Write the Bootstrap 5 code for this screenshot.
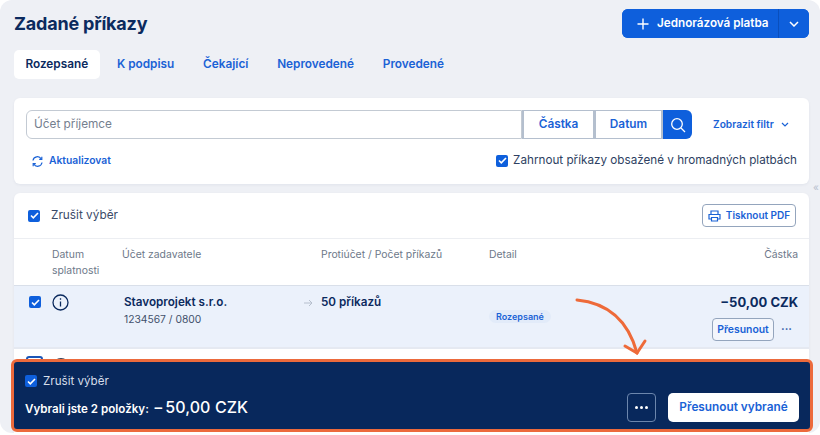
<!doctype html>
<html lang="cs"><head><meta charset="utf-8"><title>Zadané příkazy</title>
<link rel="stylesheet" href="https://cdn.jsdelivr.net/npm/bootstrap@5.3.0/dist/css/bootstrap.min.css">
<style>
html,body{height:435px;overflow:hidden;background:#fff}
body{font-family:Inter,"Liberation Sans",sans-serif;color:#0b2a5e;white-space:nowrap}
.shell{height:433px;background:#eef0f5;border-radius:12px;padding:9px 11px 0 14px;position:relative;overflow:hidden}
.ptitle{font-size:18px;font-weight:700;line-height:29px;margin:0;color:#0b2a5e;letter-spacing:-.2px}
.splitb{height:29px;border-radius:6px;overflow:hidden;background:#0e5fdc}
.splitb button{background:#0e5fdc;border:0;color:#fff;font-size:11.7px;font-weight:600;height:29px;padding:0;display:flex;align-items:center;white-space:nowrap}
.splitb .mainb{width:157px;padding-left:15px;gap:8px;border-right:1px solid #0a4fbd}
.splitb .caretb{width:30px;justify-content:center}
.tabsx{margin-top:12px;height:29px;gap:6px;font-size:11.8px;font-weight:600}
.tabsx a{display:flex;align-items:center;height:29px;padding:0 11.4px;color:#1a62d6;text-decoration:none;border-radius:5px}
.tabsx a.on{background:#fff;color:#0b2a5e}
.panel{background:#fff;border-radius:6px;box-shadow:0 1px 3px rgba(20,40,90,.06)}
.fpanel{margin-top:19px;height:86px;padding:12px 12px 0}
.fbar{height:29px;font-size:11.8px}
.finput{flex:1;border:1px solid #c3cad3;border-radius:6px 0 0 6px;padding-left:7px;line-height:27px;color:#75808f}
.fbtn{border:1px solid #b4bfce;border-left-width:2px;height:29px;display:flex;align-items:center;justify-content:center;color:#1a62d6;font-weight:600;background:#fff}
.fc1{width:72px}.fc2{width:69px;border-right-width:2px}
.fsearch{width:29px;height:29px;background:#0e5fdc;border-radius:0 6px 6px 0;display:flex;align-items:center;justify-content:center}
.fshow{width:105px;padding-left:21px;font-size:10.2px;font-weight:600;color:#1a62d6;display:flex;align-items:center;gap:7px}
.frow2{margin-top:12px;height:20px}
.refresh{margin-left:6px;font-size:10.3px;font-weight:600;color:#1a62d6;gap:6px}
.chkx{width:12px;height:12px;border-radius:2px;background:#0e5fdc;display:flex;align-items:center;justify-content:center;flex:none}
.inc{font-size:11.7px;color:#2e3f62;gap:5px}
.tpanel{margin-top:9px;height:300px;overflow:hidden}
.thead1{height:46px;padding:0 13px 0 14px;border-bottom:1px solid #eceef2;font-size:11.8px;color:#3b4a68}
.sel{gap:11px}
.pdfb{height:23px;width:94px;border:1px solid #94a5bd;border-radius:4px;color:#1a62d6;font-size:10px;font-weight:600;gap:5px;background:#fff;display:flex;align-items:center;justify-content:center}
.grid6{display:grid;grid-template-columns:38px 70px 199px 168px 1fr 120px}
.thead2{height:47px;padding:8px 11px 0 0;font-size:10.4px;color:#6d7889;line-height:15.5px;border-bottom:1px solid #d9dfe9}
.rowa{height:63px;background:#ebf1fb;padding:8px 11px 0 0;border-bottom:2px solid #e5e9f1}
.rowa .cbcell{padding:2px 0 0 15px}
.rname{font-size:11.7px;font-weight:600;color:#0b2a5e;line-height:17px;margin:0 0 0 2px}
.racc{font-size:10.3px;color:#42506b;line-height:17px;margin:0 0 0 2px}
.rcnt{font-size:11.7px;font-weight:600;line-height:17px;position:relative}
.harrow{position:absolute;left:-17px;top:5px}
.pill{display:inline-block;margin-top:16px;background:#e2ebf9;color:#1a62d6;font-size:9px;font-weight:600;border-radius:8px;padding:0 7px;line-height:13px}
.ramt{font-size:13px;font-weight:700;text-align:right;line-height:17px}
.moverow{margin-top:7px}
.moveb{height:23px;width:62px;border:1px solid #94a5bd;border-radius:4px;font-size:10.4px;font-weight:600;color:#1a62d6;background:#f3f6fc;display:flex;align-items:center;justify-content:center}
.rdots{width:24px;font-size:11px;color:#2d5aa8;font-weight:700;text-align:right;padding-right:6px}
.rowb{height:40px;padding:7px 0 0 12px;background:#fff}
.bbox{width:17px;height:16px;border:2px solid #1a56b8;border-radius:3px}
.bcir{width:16px;height:16px;border:2px solid #333f56;border-radius:50%;margin:2px 0 0 10px}
.selbar{position:absolute;left:11px;top:359px;width:802px;height:73px;background:#08285c;border:3px solid #ec6a3c;border-radius:6px;color:#fff;padding:12px 11px 0 11px}
.s1{font-size:11.6px;color:#d6deea;gap:6px;line-height:14px}
.sl{font-size:11.6px;font-weight:600;display:flex;align-items:baseline;gap:4px;margin-top:7px}
.sl b{font-size:16px;font-weight:500;letter-spacing:.1px}
.groupb{margin-top:5px}
.dotsb{width:29px;height:29px;border:1px solid #6c86ad;border-radius:4px;display:flex;align-items:center;justify-content:center;gap:2px}
.dotsb i{width:3px;height:3px;border-radius:50%;background:#fff;display:block}
.moveall{height:29px;width:131px;background:#fff;border-radius:5px;border:0;color:#1a62d6;font-size:11.8px;font-weight:600;margin-left:12px}
.curve{position:absolute;left:570px;top:295px;pointer-events:none}
.handle{position:absolute;left:813px;top:182px;color:#b9c1cf;font-size:10px;line-height:10px}
</style></head><body>
<div class="shell">
 <div class="d-flex justify-content-between align-items-center">
  <h1 class="ptitle">Zadané příkazy</h1>
  <div class="splitb d-flex">
   <button class="mainb"><svg width="12" height="12" viewBox="0 0 12 12"><path d="M6 .5v11M.5 6h11" stroke="#fff" stroke-width="1.4" fill="none"/></svg>Jednorázová platba</button>
   <button class="caretb"><svg width="10" height="6" viewBox="0 0 10 6"><path d="M1 1l4 4 4-4" stroke="#fff" stroke-width="1.5" fill="none"/></svg></button>
  </div>
 </div>
 <div class="tabsx d-flex">
  <a class="on" href="#">Rozepsané</a><a href="#">K podpisu</a><a href="#">Čekající</a><a href="#">Neprovedené</a><a href="#">Provedené</a>
 </div>
 <div class="panel fpanel">
  <div class="fbar d-flex">
   <div class="finput">Účet příjemce</div>
   <div class="fbtn fc1">Částka</div><div class="fbtn fc2">Datum</div>
   <div class="fsearch"><svg width="16" height="16" viewBox="0 0 16 16"><circle cx="7" cy="7" r="5.3" stroke="#fff" stroke-width="1.3" fill="none"/><path d="M11 11l4 4" stroke="#fff" stroke-width="1.3"/></svg></div>
   <div class="fshow">Zobrazit filtr <svg width="8" height="5" viewBox="0 0 8 5"><path d="M1 1l3 3 3-3" stroke="#1a62d6" stroke-width="1.2" fill="none"/></svg></div>
  </div>
  <div class="frow2 d-flex justify-content-between align-items-center">
   <div class="refresh d-flex align-items-center"><svg width="11" height="11" viewBox="0 0 11 11" fill="none" stroke="#1a62d6" stroke-width="1.2"><path d="M1 4.5A4.4 4.4 0 0 1 9.2 3M10 6.5A4.4 4.4 0 0 1 1.8 8"/><path d="M9.8 .8v2.6H7.2M1.2 10.2V7.6h2.6"/></svg>Aktualizovat</div>
   <div class="inc d-flex align-items-center"><span class="chkx"><svg width="9" height="7" viewBox="0 0 9 7"><path d="M1 3.5l2.3 2.3L8 1" stroke="#fff" stroke-width="1.6" fill="none"/></svg></span>Zahrnout příkazy obsažené v hromadných platbách</div>
  </div>
 </div>
 <div class="panel tpanel">
  <div class="thead1 d-flex justify-content-between align-items-center">
   <div class="sel d-flex align-items-center"><span class="chkx"><svg width="9" height="7" viewBox="0 0 9 7"><path d="M1 3.5l2.3 2.3L8 1" stroke="#fff" stroke-width="1.6" fill="none"/></svg></span>Zrušit výběr</div>
   <div class="pdfb"><svg width="13" height="12" viewBox="0 0 13 12" fill="none" stroke="#1a62d6" stroke-width="1.2"><path d="M3 4V1h7v3M3 9H1V4.5h11V9h-2"/><path d="M3.5 7.5h6v3.5h-6z"/></svg>Tisknout PDF</div>
  </div>
  <div class="thead2 grid6">
   <div></div><div>Datum<br>splatnosti</div><div>Účet zadavatele</div><div>Protiúčet / Počet příkazů</div><div>Detail</div><div class="text-end">Částka</div>
  </div>
  <div class="rowa grid6">
   <div class="cbcell"><span class="chkx"><svg width="9" height="7" viewBox="0 0 9 7"><path d="M1 3.5l2.3 2.3L8 1" stroke="#fff" stroke-width="1.6" fill="none"/></svg></span></div>
   <div><svg class="d-block" width="17" height="17" viewBox="0 0 17 17" fill="none" stroke="#0b2a5e" stroke-width="1.3"><circle cx="8.5" cy="8.5" r="7.5"/><path d="M8.5 7.5v5M8.5 4.3v1.4"/></svg></div>
   <div><p class="rname">Stavoprojekt s.r.o.</p><p class="racc">1234567 / 0800</p></div>
   <div class="rcnt"><svg class="harrow" width="9" height="8" viewBox="0 0 9 8" fill="none" stroke="#b6bfcd" stroke-width="1"><path d="M0 4h8M5 1l3 3-3 3"/></svg>50 příkazů</div>
   <div><span class="pill">Rozepsané</span></div>
   <div class="d-flex flex-column align-items-end"><div class="ramt">−50,00 CZK</div><div class="d-flex align-items-center moverow"><div class="moveb">Přesunout</div><div class="rdots">···</div></div></div>
  </div>
  <div class="rowb d-flex"><div class="bbox"></div><div class="bcir"></div></div>
 </div>
 <svg class="curve" width="80" height="62" viewBox="0 0 80 62" fill="none" stroke="#ee6a39" stroke-width="3" stroke-linecap="round"><path d="M7 5C38 8 58 25 67 58"/><path d="M55 51l12 7 8-12"/></svg>
 <div class="selbar">
  <div class="s1 d-flex align-items-center"><span class="chkx"><svg width="9" height="7" viewBox="0 0 9 7"><path d="M1 3.5l2.3 2.3L8 1" stroke="#fff" stroke-width="1.6" fill="none"/></svg></span>Zrušit výběr</div>
  <div class="d-flex justify-content-between align-items-start">
   <div class="sl">Vybrali jste 2 položky: <b>−&#8202;50,00 CZK</b></div>
   <div class="d-flex groupb"><div class="dotsb"><i></i><i></i><i></i></div><button class="moveall">Přesunout vybrané</button></div>
  </div>
 </div>
 <div class="handle">«</div>
</div>
</body></html>
